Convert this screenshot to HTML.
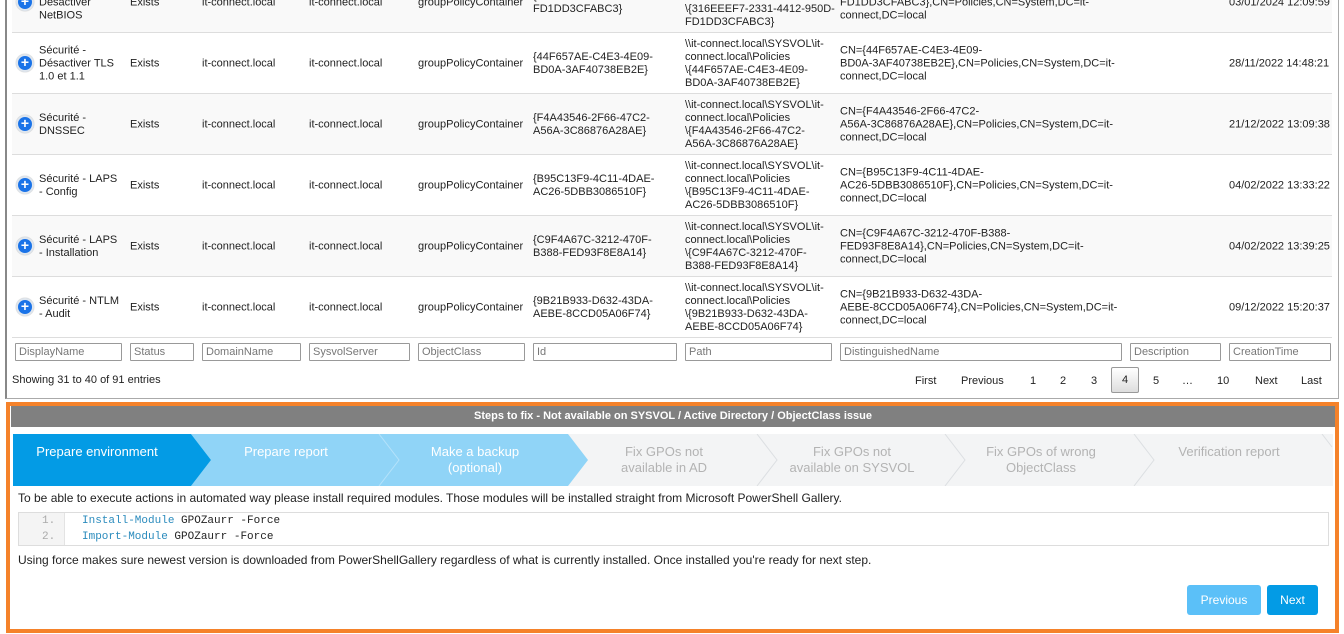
<!DOCTYPE html>
<html><head><meta charset="utf-8"><style>
*{margin:0;padding:0;box-sizing:border-box}
body{width:1344px;height:634px;overflow:hidden;background:#fff;font-family:"Liberation Sans",Arial,sans-serif;position:relative;color:#222}
.abs{position:absolute}
#tbl{left:5px;top:-10px;width:1334px;height:409px;border:1px solid #aaa;border-left:2px solid #888;}
.row{position:absolute;left:12px;width:1320px;height:61px;border-bottom:1px solid #ddd;font-size:11px;line-height:13px}
.row.g{background:#f9f9f9}
.c{position:absolute;top:50%;transform:translateY(-50%);margin-top:1px}
.ic{position:absolute;left:4px;top:50%;margin-top:-9px;width:18px;height:18px;border-radius:50%;background:#1a73e8;border:2px solid #dfe6ee;color:#fff;font-size:14px;line-height:13px;text-align:center;font-weight:bold;box-shadow:0 0 1px #999}
.inp{position:absolute;top:343px;height:18px;border:1px solid #999;font-size:11px;color:#777;padding:2px 3px;line-height:12px;border-radius:1px}
.pg{position:absolute;top:375px;font-size:11px;line-height:12px}
#box{left:6px;top:402px;width:1333px;height:231px;border:4px solid #f5822a;border-top-width:4px}
</style></head><body>
<div id="tbl" class="abs"></div>

<div class="row g" style="top:-28px"><div class="ic">+</div>
<div class="c" style="left:27px">Sécurité -<br>Désactiver<br>NetBIOS</div><div class="c" style="left:118px">Exists</div><div class="c" style="left:190px">it-connect.local</div><div class="c" style="left:297px">it-connect.local</div><div class="c" style="left:406px">groupPolicyContainer</div><div class="c" style="left:521px">{316EEEF7-2331-4412-950D-<br>FD1DD3CFABC3}</div><div class="c" style="left:673px">\\it-connect.local\SYSVOL\it-<br>connect.local\Policies<br>\{316EEEF7-2331-4412-950D-<br>FD1DD3CFABC3}</div><div class="c" style="left:828px">CN={316EEEF7-2331-4412-950D-<br>FD1DD3CFABC3},CN=Policies,CN=System,DC=it-<br>connect,DC=local</div><div class="c" style="left:1217px">03/01/2024 12:09:59</div></div>

<div class="row" style="top:33px"><div class="ic">+</div>
<div class="c" style="left:27px">Sécurité -<br>Désactiver TLS<br>1.0 et 1.1</div><div class="c" style="left:118px">Exists</div><div class="c" style="left:190px">it-connect.local</div><div class="c" style="left:297px">it-connect.local</div><div class="c" style="left:406px">groupPolicyContainer</div><div class="c" style="left:521px">{44F657AE-C4E3-4E09-<br>BD0A-3AF40738EB2E}</div><div class="c" style="left:673px">\\it-connect.local\SYSVOL\it-<br>connect.local\Policies<br>\{44F657AE-C4E3-4E09-<br>BD0A-3AF40738EB2E}</div><div class="c" style="left:828px">CN={44F657AE-C4E3-4E09-<br>BD0A-3AF40738EB2E},CN=Policies,CN=System,DC=it-<br>connect,DC=local</div><div class="c" style="left:1217px">28/11/2022 14:48:21</div></div>

<div class="row g" style="top:94px"><div class="ic">+</div>
<div class="c" style="left:27px">Sécurité -<br>DNSSEC</div><div class="c" style="left:118px">Exists</div><div class="c" style="left:190px">it-connect.local</div><div class="c" style="left:297px">it-connect.local</div><div class="c" style="left:406px">groupPolicyContainer</div><div class="c" style="left:521px">{F4A43546-2F66-47C2-<br>A56A-3C86876A28AE}</div><div class="c" style="left:673px">\\it-connect.local\SYSVOL\it-<br>connect.local\Policies<br>\{F4A43546-2F66-47C2-<br>A56A-3C86876A28AE}</div><div class="c" style="left:828px">CN={F4A43546-2F66-47C2-<br>A56A-3C86876A28AE},CN=Policies,CN=System,DC=it-<br>connect,DC=local</div><div class="c" style="left:1217px">21/12/2022 13:09:38</div></div>

<div class="row" style="top:155px"><div class="ic">+</div>
<div class="c" style="left:27px">Sécurité - LAPS<br>- Config</div><div class="c" style="left:118px">Exists</div><div class="c" style="left:190px">it-connect.local</div><div class="c" style="left:297px">it-connect.local</div><div class="c" style="left:406px">groupPolicyContainer</div><div class="c" style="left:521px">{B95C13F9-4C11-4DAE-<br>AC26-5DBB3086510F}</div><div class="c" style="left:673px">\\it-connect.local\SYSVOL\it-<br>connect.local\Policies<br>\{B95C13F9-4C11-4DAE-<br>AC26-5DBB3086510F}</div><div class="c" style="left:828px">CN={B95C13F9-4C11-4DAE-<br>AC26-5DBB3086510F},CN=Policies,CN=System,DC=it-<br>connect,DC=local</div><div class="c" style="left:1217px">04/02/2022 13:33:22</div></div>

<div class="row g" style="top:216px"><div class="ic">+</div>
<div class="c" style="left:27px">Sécurité - LAPS<br>- Installation</div><div class="c" style="left:118px">Exists</div><div class="c" style="left:190px">it-connect.local</div><div class="c" style="left:297px">it-connect.local</div><div class="c" style="left:406px">groupPolicyContainer</div><div class="c" style="left:521px">{C9F4A67C-3212-470F-<br>B388-FED93F8E8A14}</div><div class="c" style="left:673px">\\it-connect.local\SYSVOL\it-<br>connect.local\Policies<br>\{C9F4A67C-3212-470F-<br>B388-FED93F8E8A14}</div><div class="c" style="left:828px">CN={C9F4A67C-3212-470F-B388-<br>FED93F8E8A14},CN=Policies,CN=System,DC=it-<br>connect,DC=local</div><div class="c" style="left:1217px">04/02/2022 13:39:25</div></div>

<div class="row" style="top:277px"><div class="ic">+</div>
<div class="c" style="left:27px">Sécurité - NTLM<br>- Audit</div><div class="c" style="left:118px">Exists</div><div class="c" style="left:190px">it-connect.local</div><div class="c" style="left:297px">it-connect.local</div><div class="c" style="left:406px">groupPolicyContainer</div><div class="c" style="left:521px">{9B21B933-D632-43DA-<br>AEBE-8CCD05A06F74}</div><div class="c" style="left:673px">\\it-connect.local\SYSVOL\it-<br>connect.local\Policies<br>\{9B21B933-D632-43DA-<br>AEBE-8CCD05A06F74}</div><div class="c" style="left:828px">CN={9B21B933-D632-43DA-<br>AEBE-8CCD05A06F74},CN=Policies,CN=System,DC=it-<br>connect,DC=local</div><div class="c" style="left:1217px">09/12/2022 15:20:37</div></div>

<div class="inp" style="left:15px;width:107px">DisplayName</div>
<div class="inp" style="left:130px;width:64px">Status</div>
<div class="inp" style="left:202px;width:99px">DomainName</div>
<div class="inp" style="left:309px;width:101px">SysvolServer</div>
<div class="inp" style="left:418px;width:107px">ObjectClass</div>
<div class="inp" style="left:533px;width:144px">Id</div>
<div class="inp" style="left:685px;width:147px">Path</div>
<div class="inp" style="left:840px;width:282px">DistinguishedName</div>
<div class="inp" style="left:1130px;width:91px">Description</div>
<div class="inp" style="left:1229px;width:102px">CreationTime</div>

<div class="abs" style="left:12px;top:374px;font-size:11px">Showing 31 to 40 of 91 entries</div>
<div class="pg" style="left:915px">First</div>
<div class="pg" style="left:961px">Previous</div>
<div class="pg" style="left:1030px">1</div>
<div class="pg" style="left:1060px">2</div>
<div class="pg" style="left:1091px">3</div>
<div class="abs" style="left:1111px;top:367px;width:28px;height:26px;border:1px solid #999;background:linear-gradient(#fff,#ddd);border-radius:2px;font-size:11px;text-align:center;line-height:25px">4</div>
<div class="pg" style="left:1153px">5</div>
<div class="pg" style="left:1182px">…</div>
<div class="pg" style="left:1217px">10</div>
<div class="pg" style="left:1255px">Next</div>
<div class="pg" style="left:1301px">Last</div>

<div id="box" class="abs"></div>
<div class="abs" style="left:11px;top:406px;width:1324px;height:21px;background:#808080;color:#fff;font-weight:bold;font-size:11px;text-align:center;line-height:21px">Steps to fix - Not available on SYSVOL / Active Directory / ObjectClass issue</div>

<svg class="abs" style="left:13px;top:434px" width="1320" height="52" font-family="Liberation Sans, Arial, sans-serif" font-size="13" text-anchor="middle">
<rect width="1320" height="52" fill="#f3f4f5"/>
<polygon points="366,0 555,0 575,26 555,52 366,52 386,26" fill="#90d4f7"/>
<polygon points="178,0 367,0 387,26 367,52 178,52 198,26" fill="#90d4f7"/>
<polyline points="366,0 386,26 366,52" fill="none" stroke="#b5e2fa"/>
<polygon points="0,0 178,0 198,26 178,52 0,52" fill="#039be5"/>
<g fill="none" stroke="#dcdfe2"><polyline points="744,0 764,26 744,52"/><polyline points="932,0 952,26 932,52"/><polyline points="1121,0 1141,26 1121,52"/><polyline points="1309,0 1319,13"/></g>
<text x="84" y="22" fill="#fff">Prepare environment</text>
<text x="273" y="22" fill="#fff">Prepare report</text>
<text x="462" y="22" fill="#fff">Make a backup</text><text x="462" y="38" fill="#fff">(optional)</text>
<g fill="#b3b3b3"><text x="651" y="22">Fix GPOs not</text><text x="651" y="38">available in AD</text>
<text x="839" y="22">Fix GPOs not</text><text x="839" y="38">available on SYSVOL</text>
<text x="1028" y="22">Fix GPOs of wrong</text><text x="1028" y="38">ObjectClass</text>
<text x="1216" y="22">Verification report</text></g>
</svg>

<div class="abs" style="left:18px;top:491px;font-size:12px">To be able to execute actions in automated way please install required modules. Those modules will be installed straight from Microsoft PowerShell Gallery.</div>
<div class="abs" style="left:18px;top:512px;width:1311px;height:34px;border:1px solid #ddd;background:#fff;font-family:'Liberation Mono',monospace;font-size:11px;line-height:16px">
<div class="abs" style="left:0;top:0;width:46px;height:32px;background:#f4f4f4;border-right:1px solid #e3e3e3;color:#aaa"><div style="position:absolute;left:23px;top:0">1.</div><div style="position:absolute;left:23px;top:16px">2.</div></div>
<div class="abs" style="left:63px;top:0"><span style="color:#2a8bbd">Install-Module</span> GPOZaurr -Force</div>
<div class="abs" style="left:63px;top:16px"><span style="color:#2a8bbd">Import-Module</span> GPOZaurr -Force</div>
</div>
<div class="abs" style="left:18px;top:553px;font-size:12px">Using force makes sure newest version is downloaded from PowerShellGallery regardless of what is currently installed. Once installed you're ready for next step.</div>

<div class="abs" style="left:1187px;top:585px;width:74px;height:30px;background:#5bc0f8;border-radius:3px;color:#fff;font-size:12px;text-align:center;line-height:30px">Previous</div>
<div class="abs" style="left:1267px;top:585px;width:51px;height:30px;background:#039be5;border-radius:3px;color:#fff;font-size:12px;text-align:center;line-height:30px">Next</div>
</body></html>
